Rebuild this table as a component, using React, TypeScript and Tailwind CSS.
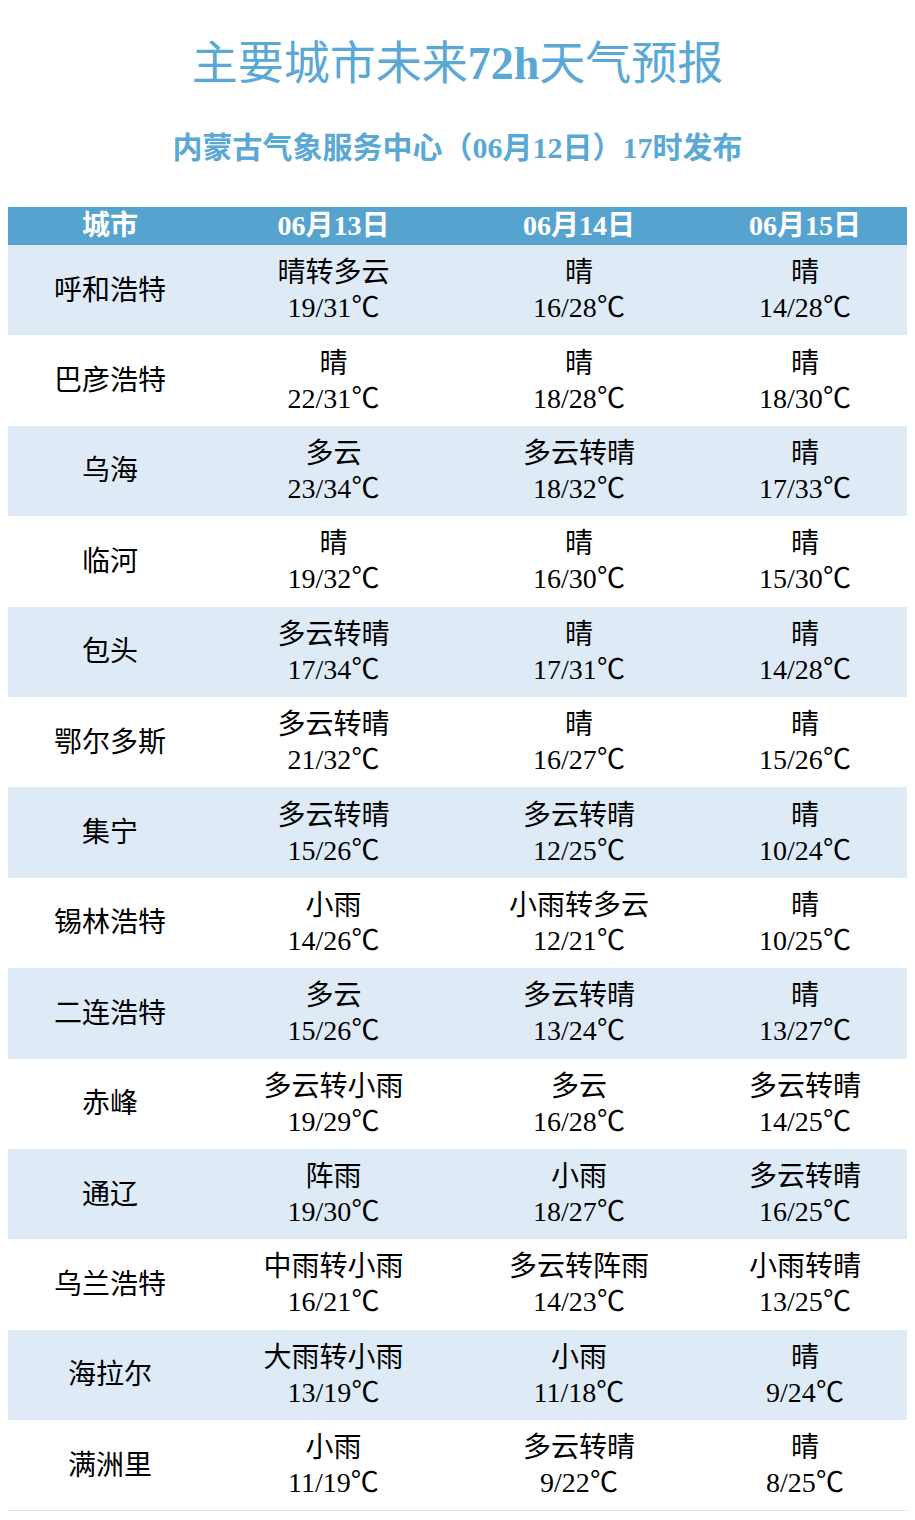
const font = "font-['Liberation_Serif','Noto_Sans_CJK_SC',serif]"

type Day = [string, string]
type Row = { city: string; days: [Day, Day, Day] }

const dates = ['06月13日', '06月14日', '06月15日']

const rows: Row[] = [
  { city: '呼和浩特', days: [['晴转多云', '19/31'], ['晴', '16/28'], ['晴', '14/28']] },
  { city: '巴彦浩特', days: [['晴', '22/31'], ['晴', '18/28'], ['晴', '18/30']] },
  { city: '乌海', days: [['多云', '23/34'], ['多云转晴', '18/32'], ['晴', '17/33']] },
  { city: '临河', days: [['晴', '19/32'], ['晴', '16/30'], ['晴', '15/30']] },
  { city: '包头', days: [['多云转晴', '17/34'], ['晴', '17/31'], ['晴', '14/28']] },
  { city: '鄂尔多斯', days: [['多云转晴', '21/32'], ['晴', '16/27'], ['晴', '15/26']] },
  { city: '集宁', days: [['多云转晴', '15/26'], ['多云转晴', '12/25'], ['晴', '10/24']] },
  { city: '锡林浩特', days: [['小雨', '14/26'], ['小雨转多云', '12/21'], ['晴', '10/25']] },
  { city: '二连浩特', days: [['多云', '15/26'], ['多云转晴', '13/24'], ['晴', '13/27']] },
  { city: '赤峰', days: [['多云转小雨', '19/29'], ['多云', '16/28'], ['多云转晴', '14/25']] },
  { city: '通辽', days: [['阵雨', '19/30'], ['小雨', '18/27'], ['多云转晴', '16/25']] },
  { city: '乌兰浩特', days: [['中雨转小雨', '16/21'], ['多云转阵雨', '14/23'], ['小雨转晴', '13/25']] },
  { city: '海拉尔', days: [['大雨转小雨', '13/19'], ['小雨', '11/18'], ['晴', '9/24']] },
  { city: '满洲里', days: [['小雨', '11/19'], ['多云转晴', '9/22'], ['晴', '8/25']] },
]

const cols = 'grid grid-cols-[204px_243px_248px_204px]'

export default function App() {
  return (
    <div className={`${font} w-[915px] bg-white pb-[9px]`}>
      <h1 className="pt-[36px] text-center text-[46px] leading-[56px] font-normal text-[#5aa8d5]">
        主要城市未来<b>72h</b>天气预报
      </h1>
      <p className="mt-[36px] text-center text-[30px] leading-[40px] font-bold text-[#5aa8d5] [text-spacing-trim:space-all]">
        内蒙古气象服务中心（06月12日）17时发布
      </p>

      <div className="mx-[8px] mt-[39px] border-b border-[#e3e3e3]">
        <div className={`${cols} h-[38px] items-center bg-[#57a3cf] text-[28px] leading-[38px] font-bold text-white`}>
          <div className="text-center">城市</div>
          {dates.map((d) => (
            <div key={d} className="text-center">
              {d}
            </div>
          ))}
        </div>

        {rows.map((r, i) => (
          <div
            key={r.city}
            className={`${cols} h-[90.4px] items-center text-[28px] leading-[35px] text-black ${
              i % 2 === 0 ? 'bg-[#deebf6]' : 'bg-white'
            }`}
          >
            <div className="text-center">{r.city}</div>
            {r.days.map(([w, t], j) => (
              <div key={j} className="text-center">
                <div>{w}</div>
                <div>{t}℃</div>
              </div>
            ))}
          </div>
        ))}
      </div>
    </div>
  )
}
